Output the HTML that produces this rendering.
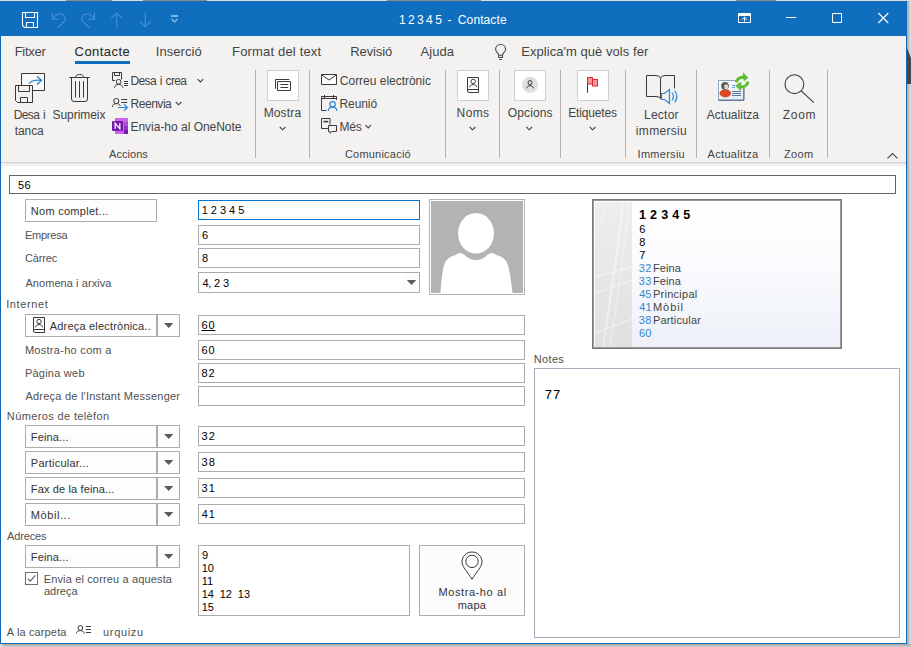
<!DOCTYPE html>
<html lang="ca"><head><meta charset="utf-8"><title>1 2 3 4 5 - Contacte</title>
<style>
html,body{margin:0;padding:0}
body{width:911px;height:647px;position:relative;overflow:hidden;background:#f4f4f4;font-family:"Liberation Sans",sans-serif}
.t{position:absolute;white-space:pre;line-height:16px}
.a{position:absolute;box-sizing:border-box}
svg{position:absolute;overflow:visible}
.sep{position:absolute;top:70px;width:1px;height:88px;background:#b3b0ad}
.ibox{position:absolute;box-sizing:border-box;top:70px;width:32px;height:31px;background:#fff;border:1px solid #d2d0ce}
.fld{position:absolute;box-sizing:border-box;left:198px;height:20px;background:#fff;border:1px solid #ababab}
.w1{width:222px}
.w2{width:327px}
.btn{position:absolute;box-sizing:border-box;left:25px;width:132px;height:23px;background:#fdfdfd;border:1px solid #adadad}
.dd{position:absolute;box-sizing:border-box;left:157px;width:23px;height:23px;background:#fdfdfd;border:1px solid #adadad}
.dd:after{content:"";position:absolute;left:6px;top:8px;width:9.4px;height:5px;background:#5a5a5a;clip-path:polygon(0 0,100% 0,50% 100%)}
.arr{width:9.4px;height:5px;background:#5a5a5a;clip-path:polygon(0 0,100% 0,50% 100%)}

</style></head>
<body>
<div class="a" id="win" style="left:0;top:1px;width:907px;height:643px;background:#fff;border:1px solid #0f69bb"></div>
<div class="a" id="shadow" style="left:0;top:644px;width:911px;height:3px;background:linear-gradient(#a9a5a2,#cfcfcf)"></div>
<div class="a" style="left:907px;top:1px;width:4px;height:643px;background:linear-gradient(90deg,#aaa6a4,#e2e2e2)"></div><div class="a" style="left:907px;top:48px;width:4px;height:36px;background:#474545;clip-path:polygon(0 0,100% 28%,100% 100%,0 100%)"></div><div class="a" style="left:0;top:644px;width:4px;height:3px;background:linear-gradient(90deg,#e8e8e8,rgba(232,232,232,0))"></div><div class="a" style="left:0;top:0;width:911px;height:1px;background:#d9d9d9"></div><div class="a" style="left:66px;top:0;width:46px;height:1px;background:#8a8a8a"></div><div class="a" style="left:143px;top:0;width:64px;height:1px;background:#8a8a8a"></div><div class="a" style="left:387px;top:0;width:94px;height:1px;background:#8a8a8a"></div><div class="a" style="left:736px;top:0;width:40px;height:1px;background:#8a8a8a"></div>
<div class="a" id="title" style="left:0;top:1px;width:907px;height:35px;background:#106ebe"></div>
<div class="a" id="ribbon" style="left:1px;top:36px;width:905px;height:126px;background:#f3f2f1"></div>
<div class="a" style="left:1px;top:162px;width:905px;height:1px;background:#d4d2d0"></div>
<div class="a" style="left:1px;top:163px;width:905px;height:5px;background:linear-gradient(#ebeae9,#fff)"></div>
<div class="a" style="left:75px;top:61px;width:55px;height:3px;background:#106ebe"></div>
<!-- separators -->
<div class="sep" style="left:255px"></div><div class="sep" style="left:309px"></div><div class="sep" style="left:445px"></div>
<div class="sep" style="left:499px"></div><div class="sep" style="left:560px"></div><div class="sep" style="left:625px"></div>
<div class="sep" style="left:696px"></div><div class="sep" style="left:769px"></div><div class="sep" style="left:827px"></div>
<!-- icon boxes -->
<div class="ibox" style="left:267px"></div><div class="ibox" style="left:457px"></div><div class="ibox" style="left:514px"></div><div class="ibox" style="left:577px"></div>

<!-- form -->
<div class="a" style="left:9px;top:175px;width:887px;height:19px;border:1px solid #646464;background:#fff"></div>
<div class="btn" style="top:199px"></div>
<div class="fld w1" style="top:200px;border-color:#0078d7"></div>
<div class="fld w1" style="top:225px"></div>
<div class="fld w1" style="top:248px"></div>
<div class="fld w1" style="top:272px;height:21px"></div>
<div class="a" style="left:403px;top:274px;width:15px;height:17px;background:#fcfcfc"></div>
<div class="a arr" style="left:406.8px;top:280px"></div>
<!-- photo -->
<div class="a" style="left:429px;top:199px;width:96px;height:96px;border:1px solid #b4b4b4;background:#fff"></div>
<svg style="left:431px;top:201px" width="92" height="92" viewBox="0 0 92 92"><rect width="92" height="92" fill="#b3b3b3"/><path d="M9.5 92 C10.5 78 11.5 68 13.5 63 C15 58.5 18 56.5 22 55 L28.3 52 C31 52 33 53 35 55 C40 60.5 50 60.5 55 55 C57 53 59 52 61.5 52 L68 55 C72 56.5 75 58.5 76.5 63 C78.5 68 80 78 81.5 92 Z" fill="#fff"/><ellipse cx="45" cy="32.3" rx="18" ry="20.3" fill="#fff"/></svg>
<!-- internet -->
<div class="btn" style="top:314px"></div><div class="dd" style="top:314px"></div>
<div class="fld w2" style="top:315px"></div>
<div class="fld w2" style="top:340px"></div>
<div class="fld w2" style="top:363px"></div>
<div class="fld w2" style="top:386px"></div>
<!-- phones -->
<div class="btn" style="top:425px"></div><div class="dd" style="top:425px"></div><div class="fld w2" style="top:426px"></div>
<div class="btn" style="top:451px"></div><div class="dd" style="top:451px"></div><div class="fld w2" style="top:452px"></div>
<div class="btn" style="top:477px"></div><div class="dd" style="top:477px"></div><div class="fld w2" style="top:478px"></div>
<div class="btn" style="top:503px"></div><div class="dd" style="top:503px"></div><div class="fld w2" style="top:504px"></div>
<!-- address -->
<div class="btn" style="top:545px"></div><div class="dd" style="top:545px"></div>
<div class="fld" style="top:545px;width:212px;height:71px"></div>
<div class="a" style="left:419px;top:545px;width:106px;height:71px;border:1px solid #adadad;background:#fcfcfc;box-shadow:inset 0 0 0 1px #fff"></div>
<div class="a" style="left:25px;top:572px;width:13px;height:13px;border:1px solid #6e6e6e;background:#fff"></div>
<svg style="left:25px;top:572px" width="13" height="13" viewBox="0 0 13 13"><path d="M2.8 6.6 L5.3 9.2 L10.3 3.4" fill="none" stroke="#5a5a5a" stroke-width="1.1"/></svg>
<!-- notes -->
<div class="a" style="left:534px;top:368px;width:366px;height:270px;border:1px solid #a5adba;background:#fff"></div>
<!-- card -->
<div class="a" style="left:592px;top:199px;width:250px;height:150px;border:1px solid #7a7a7a;background:#9a9a9a"></div>
<div class="a" style="left:594px;top:201px;width:246px;height:146px;background:linear-gradient(#ffffff,#fbfcfe 35%,#edf1f8)"></div>
<svg style="left:594px;top:201px" width="38" height="146" viewBox="0 0 38 146"><defs><linearGradient id="cg" x1="0" y1="0" x2="0" y2="1"><stop offset="0" stop-color="#eeeeee"/><stop offset="1" stop-color="#e0e0e0"/></linearGradient><clipPath id="cc"><rect width="38" height="146"/></clipPath></defs>
<rect width="38" height="146" fill="url(#cg)"/>
<g clip-path="url(#cc)" stroke="#fff" stroke-opacity="0.42" fill="none">
<path d="M29 0 C24 50 16 100 9 146" stroke-width="2"/>
<path d="M35 0 C31 50 23 100 16 146" stroke-width="1.2"/>
<path d="M13 0 C10 12 4 28 0 38" stroke-width="1.2"/>
<path d="M0 76 L38 66" stroke-width="2"/>
<path d="M0 93 L38 79" stroke-width="1.2"/>
<path d="M0 132 L38 118" stroke-width="1.5"/>
<path d="M0.5 0 V146 M0 0.5 H38" stroke-opacity="0.8" stroke-width="1"/>
</g></svg>
<svg style="left:0;top:0" width="911" height="647" viewBox="0 0 911 647" fill="none" stroke-linecap="butt">
<!-- QAT -->
<g stroke="#fff" stroke-width="1.1">
<path d="M22.5 12.5 H37.5 V27.5 H24.5 L22.5 25.5 Z"/>
<path d="M25.5 12.5 V17.5 H34.5 V12.5"/>
<path d="M26.5 27.5 V22.5 H33.5 V27.5"/>
</g>
<g stroke="#4590d6" stroke-width="1.1">
<path d="M52.5 12.8 V19.3 H59 M52.8 19 C55.5 13.5 62 12.5 64.6 16.2 C67 20 62.5 23.5 57.5 27.6"/>
<path d="M94.5 12.8 V19.3 H88 M94.2 19 C91.5 13.5 85 12.5 82.4 16.2 C80 20 84.5 23.5 89.5 27.6"/>
<path d="M116.7 27.4 V13 M111.3 18.4 L116.7 13 L122.1 18.4"/>
<path d="M145.2 12.4 V26.8 M139.8 21.4 L145.2 26.8 L150.6 21.4"/>
</g>
<g stroke="#fff" stroke-width="1">
<path d="M171.2 16 H178 M171.6 19 L174.6 21.9 L177.6 19"/>
</g>
<!-- window buttons -->
<g stroke="#fff" stroke-width="1">
<path d="M738.5 13.5 H750.5 V22.5 H738.5 Z M738.5 15.5 H750.5 M738.5 14.5 H750.5 M744.5 21.5 V17.2 M741.8 19.8 L744.5 17.2 L747.2 19.8"/>
<path d="M786 17.5 H796"/>
<path d="M832.5 13.5 H841.5 V22.5 H832.5 Z"/>
<path d="M878.3 13 L888.3 23 M888.3 13 L878.3 23" stroke-width="1.1"/>
</g>
<!-- bulb -->
<g stroke="#444" stroke-width="1.05">
<path d="M498.7 55.2 C498.7 53 495.6 52.2 495.6 49.3 C495.6 46.4 497.8 44.4 500.6 44.4 C503.4 44.4 505.6 46.4 505.6 49.3 C505.6 52.2 502.5 53 502.5 55.2 M498.7 55.2 H502.5 V57.4 H498.7 Z M499.2 59.5 H502"/>
</g>
<!-- Desa i tanca -->
<g stroke="#3b3a39" stroke-width="1">
<path d="M21.5 85 V73.5 H44.5 V90.5 H33" fill="#fafafa"/>
<path d="M15.5 85.5 H32.5 V102.5 H17.5 L15.5 100.5 Z" fill="#f3f2f1"/>
<path d="M18.5 85.5 V91.5 H29.5 V85.5"/>
<path d="M20.5 102.5 V97.5 H27.5 V102.5"/>
</g>
<path d="M29.2 83.6 C31 80.5 35 79.8 41.2 80.2 M37 76.2 L41.5 80.3 L37 84.5" stroke="#2b88d8" stroke-width="1.3"/>
<!-- trash -->
<g stroke="#3b3a39" stroke-width="1">
<path d="M69.3 77.5 H89.7 M75.5 77.3 C75.5 73.5 83.8 73.5 83.8 77.3"/>
<path d="M71.5 77.5 V99 Q71.5 101.5 74 101.5 H85 Q87.5 101.5 87.5 99 V77.5"/>
<path d="M75.5 81.2 V97.6 M79.5 81.2 V97.6 M83.5 81.2 V97.6"/>
</g>
<!-- Desa i crea -->
<g stroke="#3b3a39" stroke-width="1">
<path d="M115 80.5 H112.5 V72.5 H121.5 V79.5"/>
<path d="M114.5 72.5 V75.5 H119.5 V72.5"/>
<circle cx="118.6" cy="81.8" r="2.4" fill="#f3f2f1"/>
<path d="M114.3 87.8 C115 83.2 122.3 83.2 123 87.8"/>
<path d="M124 81.5 H128 M124 83.5 H128 M124 85.5 H128"/>
</g>
<!-- Reenvia -->
<g stroke="#3b3a39" stroke-width="1">
<circle cx="116.3" cy="101" r="2.6"/>
<path d="M112.2 107 C113 102.6 119.5 102.6 120.3 106"/>
<path d="M121.2 99.5 H127.2 M121.2 102.5 H127.2"/>
</g>
<path d="M118 107.5 H127 M124 104.3 L127.4 107.5 L124 110.7" stroke="#2b88d8" stroke-width="1.2"/>
<!-- OneNote -->
<rect x="115" y="118" width="13" height="16" fill="#ca64ea" stroke="none"/>
<rect x="124" y="122" width="4" height="4" fill="#ae4bd5" stroke="none"/>
<rect x="124" y="126" width="4" height="4" fill="#9332bf" stroke="none"/>
<rect x="124" y="130" width="4" height="4" fill="#7719aa" stroke="none"/>
<rect x="112" y="121" width="11" height="10" rx="1" fill="#7719aa" stroke="none"/>
<path d="M115.2 128.8 V123.2 L119.8 128.8 V123.2" stroke="#fff" stroke-width="1.3"/>
<!-- chevrons -->
<g stroke="#444" stroke-width="1.1">
<path d="M197.6 79.2 L200.4 82 L203.2 79.2"/>
<path d="M175.8 102 L178.6 104.8 L181.4 102"/>
<path d="M365.4 125.2 L368.2 128 L371 125.2"/>
<path d="M279.8 127 L282.6 129.8 L285.4 127"/>
<path d="M469.7 127 L472.5 129.8 L475.3 127"/>
<path d="M526.4 127 L529.2 129.8 L532 127"/>
<path d="M589.8 127 L592.6 129.8 L595.4 127"/>
<path d="M887.5 158.3 L892.5 153.5 L897.5 158.3"/>
</g>
<!-- Mostra icon -->
<g stroke="#3b3a39" stroke-width="1">
<path d="M275.5 88.8 V79.5 H289.3"/>
<path d="M277.5 81.5 H290.5 V90.5 H277.5 Z"/>
<path d="M280.4 84.5 H288.2 M280.4 87.5 H288.2"/>
</g>
<!-- envelope -->
<g stroke="#3b3a39" stroke-width="1">
<path d="M321.5 74.5 H336.5 V84.5 H321.5 Z" fill="#fafafa"/>
<path d="M321.5 74.8 L329 80 L336.5 74.8"/>
</g>
<!-- calendar person -->
<g stroke="#3b3a39" stroke-width="1">
<path d="M326.5 110.5 H321.5 V96.5 H336.5 V100 M321.5 98.5 H336.5 M324.5 95 V98.5 M333.5 95 V98.5"/>
</g>
<g stroke="#2b88d8" stroke-width="1.2">
<circle cx="332.6" cy="104.3" r="2.7"/>
<path d="M328.3 110.8 C329 106 336.2 106 336.9 110.8"/>
</g>
<!-- Mes icon -->
<g stroke="#3b3a39" stroke-width="1">
<path d="M328 128.5 H321.5 V118.5 H330 V124.5"/>
<path d="M323.5 121.6 H328.2" stroke-width="1.6"/>
<path d="M328.5 125.5 H336.5 V131.5 H332 L330 133.3 V131.5 H328.5 Z" fill="#f3f2f1"/>
</g>
<!-- Noms icon -->
<g stroke="#3b3a39" stroke-width="1">
<path d="M467.5 77.5 H478.5 V92.5 H469 Q467.5 92.5 467.5 91 Z M467.5 90.5 Q467.5 89.5 469 89.5 H478.5"/>
<circle cx="473.2" cy="81.4" r="2.2"/>
<path d="M469.6 87.3 C470 83.6 476.4 83.6 476.8 87.3"/>
</g>
<!-- Opcions icon -->
<circle cx="530" cy="84.8" r="8" fill="#e1dfdd" stroke="none"/>
<g stroke="#3b3a39" stroke-width="1">
<circle cx="530" cy="82.6" r="2"/>
<path d="M526.6 88.3 C527 84.8 533 84.8 533.4 88.3"/>
</g>
<!-- flag -->
<path d="M587.5 77.5 V92.7" stroke="#3b3a39" stroke-width="1"/>
<rect x="587.5" y="77.5" width="5" height="6.5" fill="#f7979b" stroke="#e0282e" stroke-width="1"/>
<rect x="592.5" y="79.5" width="5" height="6.5" fill="#f7979b" stroke="#e0282e" stroke-width="1"/>
<!-- Lector -->
<g stroke="#3b3a39" stroke-width="1">
<path d="M660.5 98.5 V78.5 Q660 75.5 656 75.5 H646.5 V96.5 H656 Q659.5 96.5 660.5 98.5"/>
<path d="M660.5 78.5 Q661 75.5 665 75.5 H674.5 V88.5"/>
</g>
<g stroke="#2b88d8" stroke-width="1.2">
<path d="M661.5 93.5 H664.5 L669.5 89.5 V103.5 L664.5 99.5 H661.5 Z" fill="#f3f2f1"/>
<path d="M672 92.5 C673.8 95 673.8 98 672 100.5 M674.6 90.5 C677.6 94.5 677.6 98.5 674.6 102.5"/>
</g>
<!-- Actualitza -->
<defs><linearGradient id="ag" x1="0" y1="0" x2="1" y2="1"><stop offset="0" stop-color="#ffffff"/><stop offset="1" stop-color="#e2e9f4"/></linearGradient></defs>
<rect x="718.5" y="80.5" width="25" height="19.5" fill="url(#ag)" stroke="#8ea4c0" stroke-width="1"/>
<path d="M744 81 V100.3 H718.5" stroke="#4f6482" stroke-width="1"/>
<path d="M732 85.5 H735 M732 87.5 H735" stroke="#6aa0f0" stroke-width="1"/>
<path d="M732 91.5 H741 M732 93.5 H741 M732 95.5 H741" stroke="#5a76a8" stroke-width="1"/>
<ellipse cx="725.3" cy="93.3" rx="5.4" ry="3.8" fill="#dc4a22" stroke="#b6320f" stroke-width="0.5"/>
<circle cx="725" cy="85.8" r="3.9" fill="#5c5c5c" stroke="none"/>
<ellipse cx="726.2" cy="86.8" rx="2.1" ry="2.6" fill="#d9d9d9" stroke="none"/>
<circle cx="742" cy="81.8" r="6.6" fill="#f3f2f1" stroke="none"/>
<g stroke="#5cc032" stroke-width="3" fill="none">
<path d="M736.3 82.3 C737.5 77.6 741.5 76.6 744.5 77.4"/>
<path d="M748 81.6 C747 86.6 743 87.4 740.6 86.6"/>
</g>
<path d="M743.2 72.8 L748 77.7 L744 80.8 Z" fill="#5cc032" stroke="#45a524" stroke-width="0.5"/>
<path d="M741 82.2 L735.6 85.7 L740.6 90.6 Z" fill="#5cc032" stroke="#45a524" stroke-width="0.5"/>
<!-- Zoom -->
<g stroke="#3b3a39" stroke-width="1.1">
<circle cx="794.4" cy="84.2" r="9.4"/>
<path d="M801.2 90.8 L813.8 102.6"/>
</g>
<!-- form: contact icon in button -->
<g stroke="#3b3a39" stroke-width="1">
<path d="M33.5 317.5 H44.5 V332.5 H35 Q33.5 332.5 33.5 331 Z M33.5 330.5 Q33.5 329.5 35 329.5 H44.5"/>
<circle cx="39" cy="321.5" r="2.2"/>
<path d="M35.4 327.4 C35.8 323.7 42.2 323.7 42.6 327.4"/>
</g>
<!-- pin -->
<g stroke="#3b3a39" stroke-width="1">
<path d="M472 579.3 C467 571 462 567 462 561.8 C462 556.3 466.5 552 472 552 C477.5 552 482 556.3 482 561.8 C482 567 477 571 472 579.3 Z" fill="#fdfdfd"/>
<circle cx="472" cy="561.4" r="6.2"/>
</g>
<!-- folder icon -->
<g stroke="#3b3a39" stroke-width="1">
<circle cx="80.3" cy="628" r="2.4"/>
<path d="M76.2 633.6 C76.8 629.6 83.8 629.6 84.4 633.6"/>
<path d="M85.8 626.5 H91 M85.8 629.5 H91 M85.8 632.5 H91"/>
</g>
</svg>


<span class="t" style="left:398.89px;top:12.00px;font-size:12px;color:#fff;letter-spacing:-0.469px;">1 2 3 4 5</span>
<span class="t" style="left:447.48px;top:12.00px;font-size:12px;color:#fff;">-</span>
<span class="t" style="left:457.85px;top:12.00px;font-size:12px;color:#fff;letter-spacing:0.101px;">Contacte</span>
<span class="t" style="left:14.71px;top:44.00px;font-size:13px;color:#444444;letter-spacing:-0.299px;">Fitxer</span>
<span class="t" style="left:74.59px;top:44.00px;font-size:13px;color:#2b2a29;letter-spacing:0.457px;-webkit-text-stroke:0.08px #2b2a29;">Contacte</span>
<span class="t" style="left:155.80px;top:44.00px;font-size:13px;color:#444444;letter-spacing:0.060px;">Inserció</span>
<span class="t" style="left:232.07px;top:44.00px;font-size:13px;color:#444444;letter-spacing:0.167px;">Format del text</span>
<span class="t" style="left:350.33px;top:44.00px;font-size:13px;color:#444444;letter-spacing:-0.135px;">Revisió</span>
<span class="t" style="left:420.61px;top:44.00px;font-size:13px;color:#444444;letter-spacing:0.029px;">Ajuda</span>
<span class="t" style="left:521.21px;top:44.00px;font-size:13px;color:#444444;letter-spacing:0.049px;">Explica'm què vols fer</span>
<span class="t" style="left:13.81px;top:107.00px;font-size:12px;color:#444444;letter-spacing:-0.646px;word-spacing:1.034px;">Desa i</span>
<span class="t" style="left:14.80px;top:123.00px;font-size:12px;color:#444444;letter-spacing:-0.097px;">tanca</span>
<span class="t" style="left:52.54px;top:107.00px;font-size:12px;color:#444444;letter-spacing:-0.056px;">Suprimeix</span>
<span class="t" style="left:130.50px;top:73.00px;font-size:12px;color:#444444;letter-spacing:-0.610px;word-spacing:0.976px;">Desa i crea</span>
<span class="t" style="left:130.50px;top:96.00px;font-size:12px;color:#444444;letter-spacing:-0.456px;">Reenvia</span>
<span class="t" style="left:130.50px;top:119.00px;font-size:12px;color:#444444;letter-spacing:-0.027px;word-spacing:0.044px;">Envia-ho al OneNote</span>
<span class="t" style="left:109.07px;top:146.00px;font-size:11px;color:#444444;letter-spacing:0.049px;">Accions</span>
<span class="t" style="left:263.65px;top:105.00px;font-size:12px;color:#444444;letter-spacing:0.147px;">Mostra</span>
<span class="t" style="left:339.85px;top:73.00px;font-size:12px;color:#444444;letter-spacing:-0.022px;word-spacing:0.035px;">Correu electrònic</span>
<span class="t" style="left:339.50px;top:96.00px;font-size:12px;color:#444444;letter-spacing:-0.093px;">Reunió</span>
<span class="t" style="left:339.50px;top:119.00px;font-size:12px;color:#444444;letter-spacing:-0.213px;">Més</span>
<span class="t" style="left:344.91px;top:146.00px;font-size:11px;color:#444444;letter-spacing:0.218px;">Comunicació</span>
<span class="t" style="left:456.61px;top:105.00px;font-size:12px;color:#444444;letter-spacing:0.356px;">Noms</span>
<span class="t" style="left:507.87px;top:105.00px;font-size:12px;color:#444444;letter-spacing:0.087px;">Opcions</span>
<span class="t" style="left:568.17px;top:105.00px;font-size:12px;color:#444444;letter-spacing:-0.137px;">Etiquetes</span>
<span class="t" style="left:644.03px;top:107.00px;font-size:12px;color:#444444;letter-spacing:0.242px;">Lector</span>
<span class="t" style="left:635.85px;top:123.00px;font-size:12px;color:#444444;letter-spacing:0.323px;">immersiu</span>
<span class="t" style="left:637.55px;top:146.00px;font-size:11px;color:#444444;letter-spacing:0.280px;">Immersiu</span>
<span class="t" style="left:706.79px;top:107.00px;font-size:12px;color:#444444;letter-spacing:0.016px;">Actualitza</span>
<span class="t" style="left:707.54px;top:146.00px;font-size:11px;color:#444444;letter-spacing:0.331px;">Actualitza</span>
<span class="t" style="left:782.74px;top:107.00px;font-size:12px;color:#444444;letter-spacing:0.731px;">Zoom</span>
<span class="t" style="left:784.09px;top:146.00px;font-size:11px;color:#444444;letter-spacing:0.326px;">Zoom</span>
<span class="t" style="left:17.90px;top:177.00px;font-size:11px;color:#000;letter-spacing:0.420px;">56</span>
<span class="t" style="left:30.87px;top:203.00px;font-size:11px;color:#333333;letter-spacing:0.266px;">Nom complet...</span>
<span class="t" style="left:24.89px;top:227.00px;font-size:11px;color:#505050;letter-spacing:-0.220px;">Empresa</span>
<span class="t" style="left:25.10px;top:250.00px;font-size:11px;color:#505050;letter-spacing:-0.193px;">Càrrec</span>
<span class="t" style="left:25.42px;top:275.00px;font-size:11px;color:#505050;letter-spacing:0.068px;">Anomena i arxiva</span>
<span class="t" style="left:6.18px;top:296.00px;font-size:11px;color:#505050;letter-spacing:0.613px;">Internet</span>
<span class="t" style="left:49.69px;top:318.00px;font-size:11px;color:#333333;letter-spacing:0.199px;">Adreça electrònica..</span>
<span class="t" style="left:24.88px;top:342.00px;font-size:11px;color:#505050;letter-spacing:0.290px;">Mostra-ho com a</span>
<span class="t" style="left:24.89px;top:365.00px;font-size:11px;color:#505050;letter-spacing:0.241px;">Pàgina web</span>
<span class="t" style="left:25.42px;top:388.00px;font-size:11px;color:#505050;letter-spacing:0.228px;">Adreça de l'Instant Messenger</span>
<span class="t" style="left:6.87px;top:408.00px;font-size:11px;color:#505050;letter-spacing:0.369px;">Números de telèfon</span>
<span class="t" style="left:30.87px;top:429.00px;font-size:11px;color:#333333;letter-spacing:0.128px;">Feina...</span>
<span class="t" style="left:30.87px;top:455.00px;font-size:11px;color:#333333;letter-spacing:0.239px;">Particular...</span>
<span class="t" style="left:30.87px;top:481.00px;font-size:11px;color:#333333;letter-spacing:0.130px;">Fax de la feina...</span>
<span class="t" style="left:30.87px;top:507.00px;font-size:11px;color:#333333;letter-spacing:0.560px;">Mòbil...</span>
<span class="t" style="left:7.03px;top:528.00px;font-size:11px;color:#505050;letter-spacing:-0.144px;">Adreces</span>
<span class="t" style="left:30.87px;top:549.00px;font-size:11px;color:#333333;letter-spacing:0.128px;">Feina...</span>
<span class="t" style="left:43.71px;top:571.00px;font-size:11px;color:#505050;letter-spacing:0.147px;">Envia el correu a aquesta</span>
<span class="t" style="left:44.02px;top:583.00px;font-size:11px;color:#505050;letter-spacing:-0.025px;">adreça</span>
<span class="t" style="left:6.84px;top:624.00px;font-size:11px;color:#505050;letter-spacing:0.138px;">A la carpeta</span>
<span class="t" style="left:103.08px;top:624.00px;font-size:11px;color:#505050;letter-spacing:0.653px;">urquizu</span>
<span class="t" style="left:533.71px;top:351.00px;font-size:11px;color:#505050;letter-spacing:0.352px;">Notes</span>
<span class="t" style="left:438.48px;top:584.00px;font-size:11px;color:#333333;letter-spacing:0.589px;">Mostra-ho al</span>
<span class="t" style="left:457.67px;top:597.00px;font-size:11px;color:#333333;letter-spacing:0.271px;">mapa</span>
<span class="t" style="left:201.65px;top:202.00px;font-size:11px;color:#000;letter-spacing:-0.014px;">1 2 3 4 5</span>
<span class="t" style="left:202.05px;top:227.00px;font-size:11px;color:#000;">6</span>
<span class="t" style="left:202.07px;top:250.00px;font-size:11px;color:#000;">8</span>
<span class="t" style="left:202.42px;top:275.00px;font-size:11px;color:#000;letter-spacing:-0.177px;">4, 2 3</span>
<span class="t" style="left:201.44px;top:317.00px;font-size:11px;color:#000;letter-spacing:0.860px;text-decoration:underline;">60</span>
<span class="t" style="left:201.44px;top:342.00px;font-size:11px;color:#000;letter-spacing:0.860px;">60</span>
<span class="t" style="left:201.45px;top:365.00px;font-size:11px;color:#000;letter-spacing:0.897px;">82</span>
<span class="t" style="left:201.47px;top:428.00px;font-size:11px;color:#000;letter-spacing:1.273px;">32</span>
<span class="t" style="left:201.47px;top:454.00px;font-size:11px;color:#000;letter-spacing:1.083px;">38</span>
<span class="t" style="left:201.47px;top:480.00px;font-size:11px;color:#000;letter-spacing:1.127px;">31</span>
<span class="t" style="left:201.76px;top:506.00px;font-size:11px;color:#000;letter-spacing:0.837px;">41</span>
<span class="t" style="left:201.94px;top:547.00px;font-size:11px;color:#000;">9</span>
<span class="t" style="left:201.63px;top:560.00px;font-size:11px;color:#000;">10</span>
<span class="t" style="left:201.63px;top:573.00px;font-size:11px;color:#000;">11</span>
<span class="t" style="left:201.63px;top:599.00px;font-size:11px;color:#000;">15</span>
<span class="t" style="left:201.63px;top:586.00px;font-size:11px;color:#000;letter-spacing:-0.057px;">14  12  13</span>
<span class="t" style="left:544.81px;top:387.00px;font-size:13px;color:#000;letter-spacing:1.073px;">77</span>
<span class="t" style="left:639.04px;top:207.00px;font-size:12.5px;color:#000;letter-spacing:0.320px;font-weight:700;">1 2 3 4 5</span>
<span class="t" style="left:639.22px;top:221.00px;font-size:11px;color:#000;">6</span>
<span class="t" style="left:639.35px;top:234.00px;font-size:11px;color:#000;">8</span>
<span class="t" style="left:639.36px;top:247.00px;font-size:11px;color:#000;">7</span>
<span class="t" style="left:638.86px;top:260.00px;font-size:11px;color:#3486cf;letter-spacing:0.387px;">32</span>
<span class="t" style="left:652.98px;top:260.00px;font-size:11px;color:#444444;letter-spacing:0.068px;">Feina</span>
<span class="t" style="left:638.86px;top:273.00px;font-size:11px;color:#3486cf;letter-spacing:0.387px;">33</span>
<span class="t" style="left:652.98px;top:273.00px;font-size:11px;color:#444444;letter-spacing:0.068px;">Feina</span>
<span class="t" style="left:639.23px;top:286.00px;font-size:11px;color:#3486cf;">45</span>
<span class="t" style="left:652.98px;top:286.00px;font-size:11px;color:#444444;letter-spacing:0.266px;">Principal</span>
<span class="t" style="left:639.23px;top:299.00px;font-size:11px;color:#3486cf;letter-spacing:0.063px;">41</span>
<span class="t" style="left:652.98px;top:299.00px;font-size:11px;color:#444444;letter-spacing:0.945px;">Mòbil</span>
<span class="t" style="left:638.86px;top:312.00px;font-size:11px;color:#3486cf;letter-spacing:0.387px;">38</span>
<span class="t" style="left:652.98px;top:312.00px;font-size:11px;color:#444444;letter-spacing:0.160px;">Particular</span>
<span class="t" style="left:638.94px;top:325.00px;font-size:11px;color:#3486cf;letter-spacing:0.247px;">60</span>
</body></html>
